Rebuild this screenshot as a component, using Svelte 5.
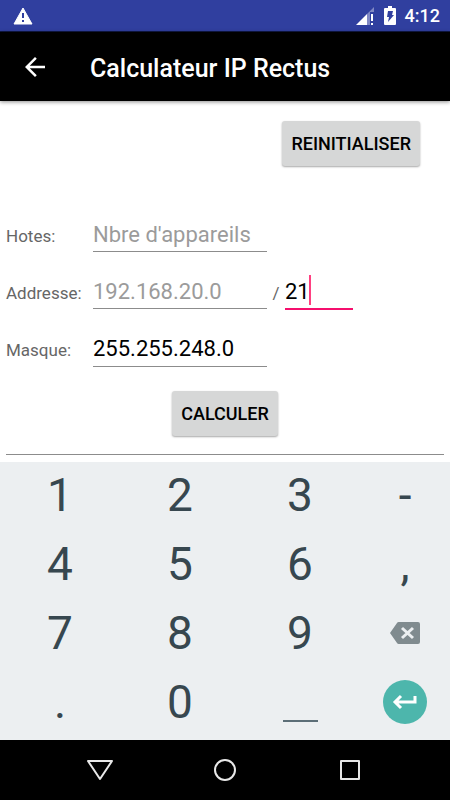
<script lang="ts">
	let hosts = $state('');
	let address = $state('');
	let prefix = $state('21');
	let mask = $state('255.255.248.0');

	const keys = ['1', '2', '3', '-', '4', '5', '6', ',', '7', '8', '9', 'del', '.', '0', 'space', 'enter'];

	function maskFromPrefix(bits: number) {
		const octets: number[] = [];
		for (let i = 0; i < 4; i++) {
			const n = Math.min(8, Math.max(0, bits - i * 8));
			octets.push(256 - 2 ** (8 - n));
		}
		return octets.join('.');
	}

	function calculate() {
		const count = parseInt(hosts);
		if (count > 0) {
			prefix = String(32 - Math.ceil(Math.log2(count + 2)));
		}
		const bits = parseInt(prefix);
		if (bits >= 0 && bits <= 32) {
			mask = maskFromPrefix(bits);
		}
	}

	function reset() {
		hosts = '';
		address = '';
		prefix = '';
		mask = '';
	}

	function press(key: string) {
		if (key === 'del') prefix = prefix.slice(0, -1);
		else if (key === 'enter') calculate();
		else if (key === 'space') prefix += ' ';
		else prefix += key;
	}
</script>

<div class="screen">
	<div class="status">
		<svg class="warning" width="20" height="18" viewBox="0 0 20 18">
			<path d="M10 1 19 17H1Z" fill="#fff" stroke="#fff" stroke-linejoin="round" />
			<path d="M9 6h2v5H9zM9 13h2v2H9z" fill="#303f9f" />
		</svg>
		<div class="status-right">
			<svg width="19" height="18" viewBox="0 0 19 18">
				<path d="M18 0V5H13ZM11 7 13 5H14V18H11Z" fill="#8088c4" />
				<path d="M0 18 11 7V18Z" fill="#fff" />
				<path d="M15 7h2v7h-2zM15 16h2v2h-2z" fill="#fff" />
			</svg>
			<svg width="12" height="19" viewBox="0 0 12 19">
				<path d="M4 0h4v2h3a1 1 0 0 1 1 1v15a1 1 0 0 1-1 1H1a1 1 0 0 1-1-1V3a1 1 0 0 1 1-1h3Z" fill="#fff" />
				<path d="M4 5h5L8 9h2L4 16 5 11H3Z" fill="#303f9f" />
			</svg>
			<span>4:12</span>
		</div>
	</div>

	<header>
		<button class="back" aria-label="Retour">
			<svg width="30" height="30" viewBox="0 0 24 24" fill="#fff">
				<path d="M20 11H7.83l5.59-5.59L12 4l-8 8 8 8 1.41-1.41L7.83 13H20v-2z" />
			</svg>
		</button>
		<h1>Calculateur IP Rectus</h1>
	</header>

	<main>
		<button class="action reset" onclick={reset}>REINITIALISER</button>

		<div class="form">
			<div class="row">
				<label for="hosts">Hotes:</label>
				<input id="hosts" placeholder="Nbre d'appareils" bind:value={hosts} />
			</div>
			<div class="row">
				<label for="address">Addresse:</label>
				<input id="address" placeholder="192.168.20.0" bind:value={address} />
				<label class="slash" for="prefix">/</label>
				<span class="prefix">
					<input id="prefix" bind:value={prefix} />
					<span class="caret"></span>
				</span>
			</div>
			<div class="row">
				<label for="mask">Masque:</label>
				<input id="mask" bind:value={mask} />
			</div>
		</div>

		<button class="action calculate" onclick={calculate}>CALCULER</button>
		<hr />
	</main>

	<div class="keyboard">
		{#each keys as key}
			<button class="key" onclick={() => press(key)} aria-label={key}>
				{#if key === 'del'}
					<svg width="30" height="24" viewBox="0 0 30 24">
						<path d="M9 1H28a2 2 0 0 1 2 2V21a2 2 0 0 1-2 2H9a2 2 0 0 1-2-1L0 12 7 2a2 2 0 0 1 2-1Z" fill="#808b8f" />
						<path d="M12 7 23 17M23 7 12 17" stroke="#eceff1" stroke-width="3" />
					</svg>
				{:else if key === 'enter'}
					<span class="enter">
						<svg width="26" height="18" viewBox="0 0 26 18" fill="none" stroke="#fff" stroke-width="3">
							<path d="M23 3V9H3M9 3 3 9l6 6" />
						</svg>
					</span>
				{:else if key === 'space'}
					<span class="space"></span>
				{:else}
					{key}
				{/if}
			</button>
		{/each}
	</div>

	<nav>
		<button aria-label="Précédent">
			<svg width="28" height="24" viewBox="0 0 28 24">
				<path d="M2 3H26L14 21Z" />
			</svg>
		</button>
		<button aria-label="Accueil">
			<svg width="24" height="24" viewBox="0 0 24 24">
				<circle cx="12" cy="12" r="10" />
			</svg>
		</button>
		<button aria-label="Applications récentes">
			<svg width="24" height="24" viewBox="0 0 24 24">
				<rect x="3" y="3" width="18" height="18" />
			</svg>
		</button>
	</nav>
</div>

<style>
	.screen {
		min-height: 100vh;
		display: flex;
		flex-direction: column;
		background: #fff;
		font-family: Roboto, sans-serif;
		color: #000;
	}

	button {
		font-family: inherit;
		border: 0;
		padding: 0;
		background: none;
		cursor: pointer;
	}

	svg {
		display: block;
	}

	.status {
		height: 32px;
		box-sizing: border-box;
		padding: 0 10px 0 13px;
		display: flex;
		align-items: center;
		justify-content: space-between;
		background: #303f9f;
		border-bottom: 1px solid #101844;
		color: #fff;
	}

	.status-right {
		display: flex;
		align-items: center;
		gap: 9px;
		font-size: 18px;
		font-weight: 500;
	}

	header {
		height: 69px;
		display: flex;
		align-items: center;
		gap: 40px;
		padding: 0 20px;
		background: #000;
		color: #fff;
		box-shadow: 0 1px 4px rgba(0, 0, 0, 0.45);
	}

	h1 {
		margin: 0;
		padding-top: 3px;
		font-size: 25px;
		font-weight: 500;
	}

	main {
		flex: 1;
		display: flex;
		flex-direction: column;
		padding: 20px 6px 7px;
	}

	.action {
		height: 45px;
		padding: 0 9px;
		border-radius: 3px;
		background: #d6d7d7;
		box-shadow: 0 1px 2px rgba(0, 0, 0, 0.35);
		font-size: 18px;
		font-weight: 500;
		color: #000;
	}

	.reset {
		align-self: flex-end;
		margin-right: 24px;
	}

	.calculate {
		align-self: center;
	}

	.form {
		display: flex;
		flex-direction: column;
		gap: 16px;
		margin: 45px 0 24px;
	}

	.row {
		display: flex;
		align-items: baseline;
	}

	label {
		width: 87px;
		font-size: 17px;
		color: #666;
	}

	.slash {
		width: 18px;
		text-align: center;
	}

	input {
		width: 174px;
		height: 41px;
		box-sizing: border-box;
		padding: 6px 0 0;
		border: 0;
		border-bottom: 1px solid #8c8c8c;
		border-radius: 0;
		outline: none;
		background: none;
		font-family: inherit;
		font-size: 22px;
		color: #000;
	}

	input::placeholder {
		color: #9b9b9b;
	}

	.prefix {
		position: relative;
	}

	.prefix input {
		width: 68px;
		border-bottom: 2px solid #f50f6d;
	}

	.caret {
		position: absolute;
		left: 24px;
		bottom: 5px;
		width: 2px;
		height: 30px;
		background: #ff4081;
	}

	hr {
		width: 100%;
		margin: auto 0 0;
		border: 0;
		border-top: 1px solid #8c8c8c;
	}

	.keyboard {
		display: grid;
		grid-template-columns: 4fr 4fr 4fr 3fr;
		grid-auto-rows: 65px;
		row-gap: 4px;
		padding-bottom: 6px;
		background: #eceff1;
	}

	.key {
		display: flex;
		align-items: center;
		justify-content: center;
		font-size: 46px;
		color: #37474f;
	}

	.space {
		width: 35px;
		height: 2px;
		margin-top: 38px;
		background: #5c6e77;
	}

	.enter {
		width: 44px;
		height: 44px;
		border-radius: 50%;
		background: #4db6ac;
		display: flex;
		align-items: center;
		justify-content: center;
	}

	nav {
		height: 60px;
		display: flex;
		justify-content: center;
		background: #000;
	}

	nav button {
		width: 125px;
		display: flex;
		align-items: center;
		justify-content: center;
	}

	nav svg {
		fill: none;
		stroke: #e8e8e8;
		stroke-width: 2;
		stroke-linejoin: round;
	}
</style>
